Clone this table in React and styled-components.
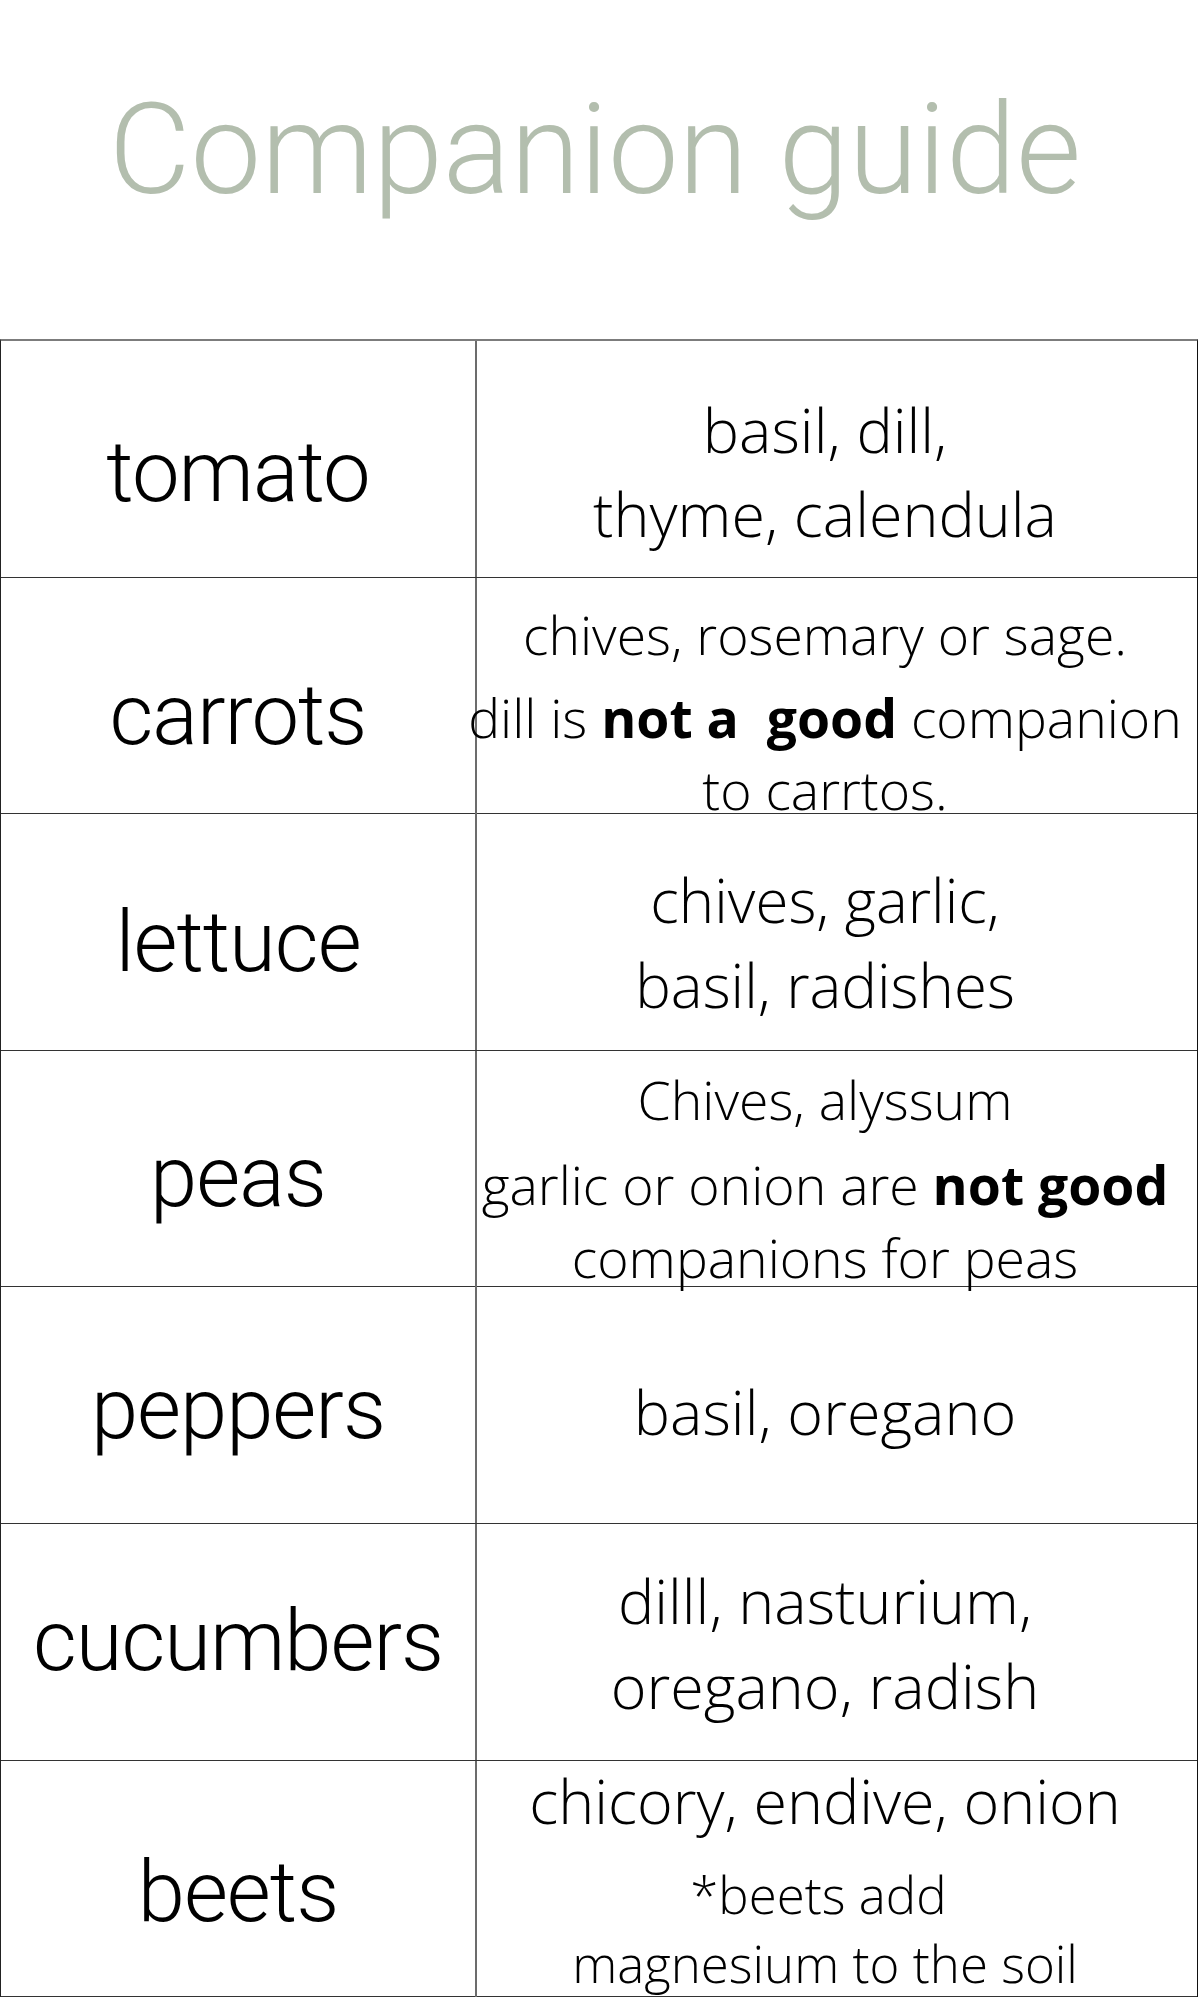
import React from "react";
import styled, { createGlobalStyle } from "styled-components";

const GlobalStyle = createGlobalStyle`
  html, body {
    margin: 0;
    padding: 0;
    background: #ffffff;
  }
`;

const Page = styled.div`
  width: 1200px;
  background: #ffffff;
  color: #000000;
`;

const Header = styled.header`
  height: 339px;
  box-sizing: border-box;
  padding: 87px 10px 0 0;
  display: flex;
  justify-content: center;
`;

const Title = styled.h1`
  margin: 0;
  font-family: Roboto, "Liberation Sans", sans-serif;
  font-weight: 300;
  font-size: 126px;
  line-height: 1;
  letter-spacing: 0;
  color: #b3beae;
`;

const Table = styled.div`
  width: 1198px;
  box-sizing: border-box;
  border-top: 2px solid #7c7c7c;
  border-left: 1px solid #222222;
  border-right: 1px solid #111111;
`;

const Row = styled.div`
  display: grid;
  grid-template-columns: 476px minmax(0, 1fr);
  height: 236.6px;
  box-sizing: border-box;
  border-bottom: 1px solid #333333;
`;

const LabelCell = styled.div`
  box-sizing: border-box;
  border-right: 2px solid #6c6c6c;
  padding-top: ${(p) => p.$shift * 2}px;
  display: flex;
  align-items: center;
  justify-content: center;
  font-family: Roboto, "Liberation Sans", sans-serif;
  font-weight: 300;
  font-size: 85px;
  line-height: 1;
  letter-spacing: -1px;
`;

const TextCell = styled.div`
  min-width: 0;
  box-sizing: border-box;
  padding-right: 24px;
  padding-top: ${(p) => (p.$shift > 0 ? p.$shift * 2 : 0)}px;
  padding-bottom: ${(p) => (p.$shift < 0 ? -p.$shift * 2 : 0)}px;
  display: flex;
  flex-direction: column;
  align-items: center;
  justify-content: center;
  font-family: "Open Sans", sans-serif;
  font-weight: 300;
`;

const Para = styled.div`
  display: flex;
  flex-direction: column;
  align-items: center;
  margin-top: ${(p) => p.$gap || 0}px;
  font-size: ${(p) => p.$size}px;
  line-height: ${(p) => p.$lh}px;
`;

const Line = styled.div`
  white-space: pre;
`;

const Strong = styled.b`
  font-weight: 700;
`;

const rows = [
  {
    name: "tomato",
    labelShift: 14,
    textShift: 13.5,
    paras: [{ size: 61, lh: 84, lines: ["basil, dill,", "thyme, calendula"] }],
  },
  {
    name: "carrots",
    labelShift: 13,
    textShift: 12.5,
    paras: [
      { size: 53.5, lh: 63.3, lines: ["chives, rosemary or sage."] },
      {
        size: 53.5,
        lh: 72.3,
        gap: 16.2,
        lines: [
          <>
            {"dill is "}
            <Strong>{"not a  good"}</Strong>
            {" companion"}
          </>,
          "to carrtos.",
        ],
      },
    ],
  },
  {
    name: "lettuce",
    labelShift: 11,
    textShift: 11.2,
    paras: [{ size: 60, lh: 85, lines: ["chives, garlic,", "basil, radishes"] }],
  },
  {
    name: "peas",
    labelShift: 5,
    textShift: 7.5,
    paras: [
      { size: 53.5, lh: 67.3, lines: ["Chives, alyssum"] },
      {
        size: 53.5,
        lh: 73.7,
        gap: 14.7,
        lines: [
          <>
            {"garlic or onion are "}
            <Strong>not good</Strong>
          </>,
          "companions for peas",
        ],
      },
    ],
  },
  {
    name: "peppers",
    labelShift: 4,
    textShift: 6.5,
    paras: [{ size: 61, lh: 84, lines: ["basil, oregano"] }],
  },
  {
    name: "cucumbers",
    labelShift: 0,
    textShift: 1.7,
    paras: [{ size: 61, lh: 85, lines: ["dilll, nasturium,", "oregano, radish"] }],
  },
  {
    name: "beets",
    labelShift: -1,
    textShift: -12.7,
    paras: [
      { size: 61, lh: 80, lines: ["chicory, endive, onion"] },
      {
        size: 51,
        lh: 69.7,
        gap: 19.1,
        lines: ["*beets add ", "magnesium to the soil"],
      },
    ],
  },
];

const GuideRow = ({ row }) => (
  <Row>
    <LabelCell $shift={Math.max(row.labelShift, 0)}>{row.name}</LabelCell>
    <TextCell $shift={row.textShift}>
      {row.paras.map((para, i) => (
        <Para key={i} $size={para.size} $lh={para.lh} $gap={para.gap}>
          {para.lines.map((line, j) => (
            <Line key={j}>{line}</Line>
          ))}
        </Para>
      ))}
    </TextCell>
  </Row>
);

export default function App() {
  return (
    <Page>
      <GlobalStyle />
      <Header>
        <Title>Companion guide</Title>
      </Header>
      <Table>
        {rows.map((row) => (
          <GuideRow key={row.name} row={row} />
        ))}
      </Table>
    </Page>
  );
}
